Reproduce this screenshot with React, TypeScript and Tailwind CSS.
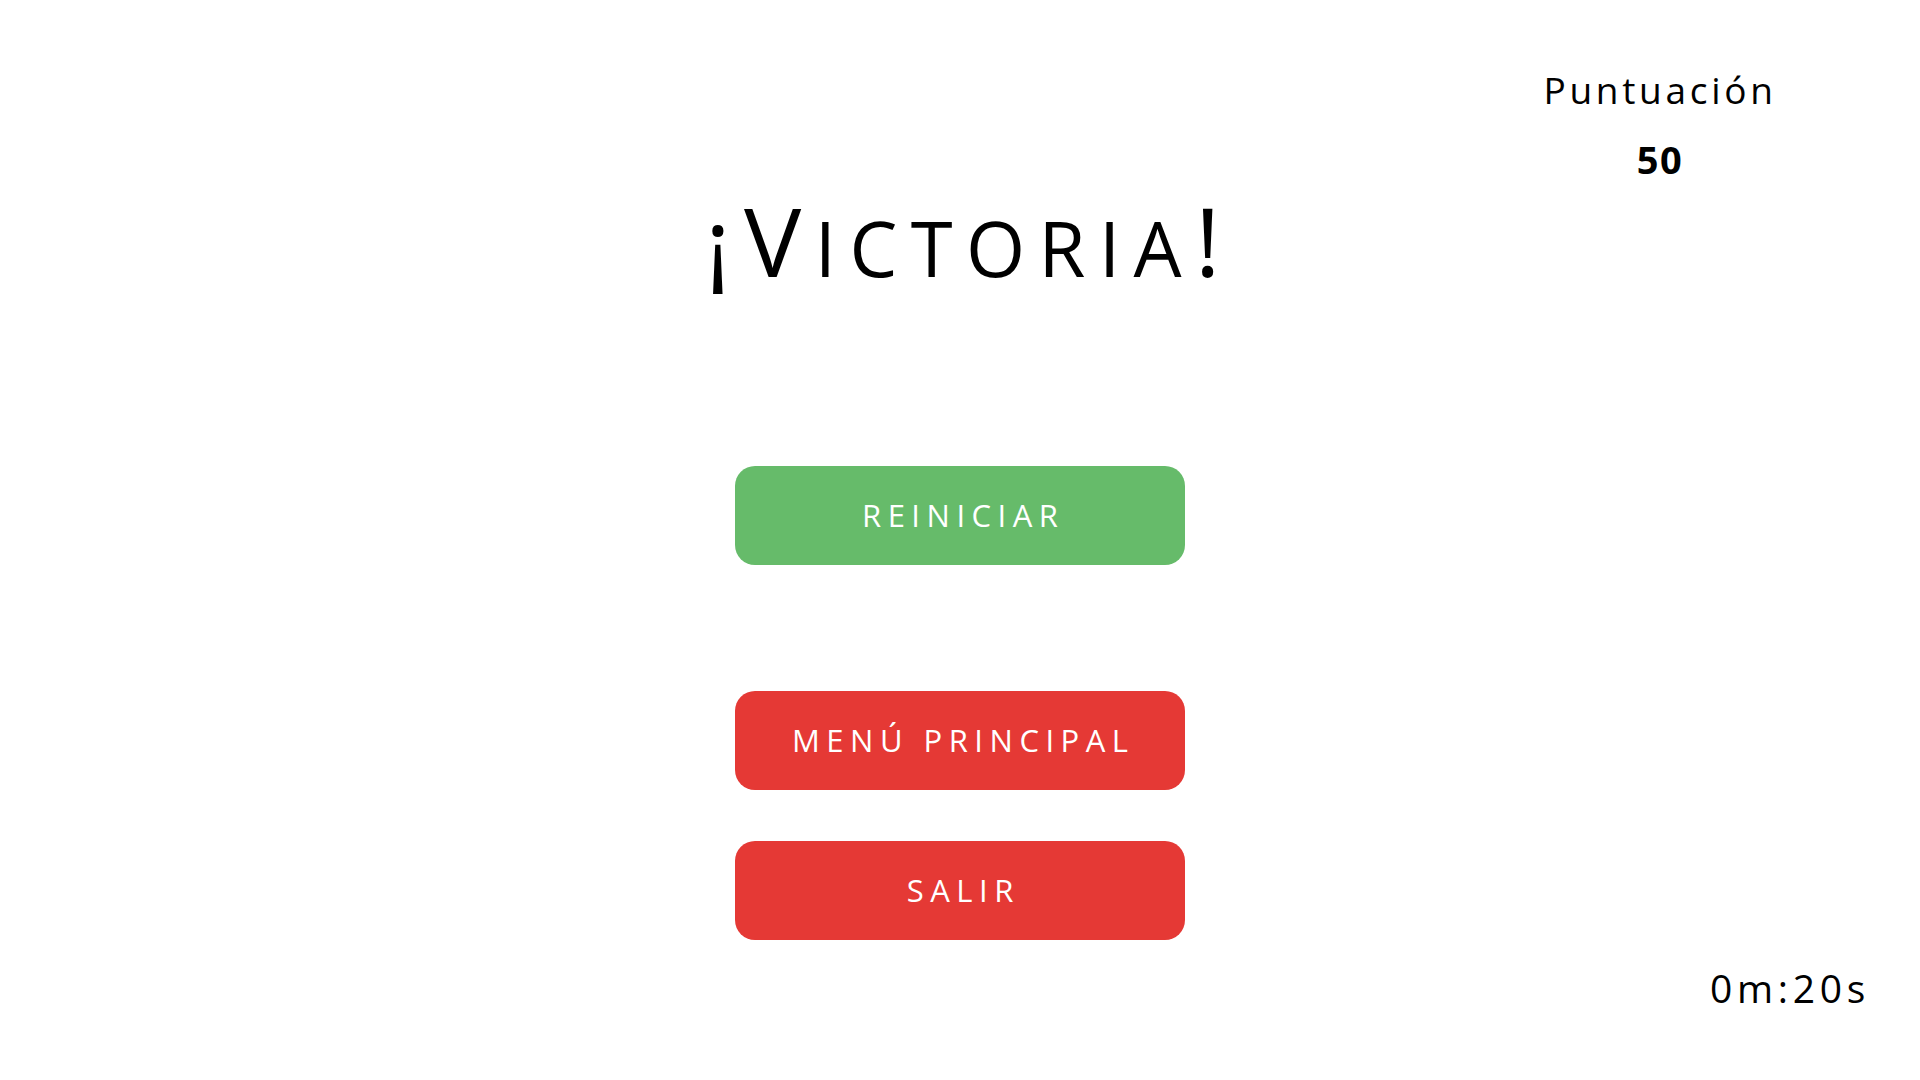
const font = { fontFamily: '"Open Sans", "Liberation Sans", sans-serif' }

const GameButton = ({ label, color }: { label: string; color: string }) => {
  return (
    <button
      className={`w-[450px] h-[99px] rounded-[20px] text-white text-[31px] tracking-[0.21em] leading-none pl-[0.21em] ${color}`}
      type="button"
    >
      {label}
    </button>
  )
}

export default function App() {
  return (
    <div className="w-full h-screen bg-white flex flex-col text-black overflow-hidden" style={font}>
      <div className="flex justify-end pr-[147px] pt-[70px]">
        <div className="w-[226px] flex flex-col items-center">
          <span className="text-[37px] leading-[40px] tracking-[0.1em]">Puntuación</span>
          <span className="text-[38px] leading-[40px] font-bold mt-[29px] tracking-[0.04em]">50</span>
        </div>
      </div>

      <h1 className="mt-[6px] text-center text-[96px] leading-[110px] tracking-[0.14em] pl-[0.2em]">
        ¡V<span className="text-[76px]">ICTORIA</span>!
      </h1>

      <div className="flex flex-col items-center mt-[163px]">
        <GameButton label="REINICIAR" color="bg-[#66bb6a]" />
        <div className="h-[126px]" />
        <GameButton label="MENÚ PRINCIPAL" color="bg-[#e53935]" />
        <div className="h-[51px]" />
        <GameButton label="SALIR" color="bg-[#e53935]" />
      </div>

      <div className="flex justify-end pr-[50px] mt-[26px]">
        <span className="text-[39px] leading-[44px] tracking-[0.12em]">0m:20s</span>
      </div>
    </div>
  )
}
